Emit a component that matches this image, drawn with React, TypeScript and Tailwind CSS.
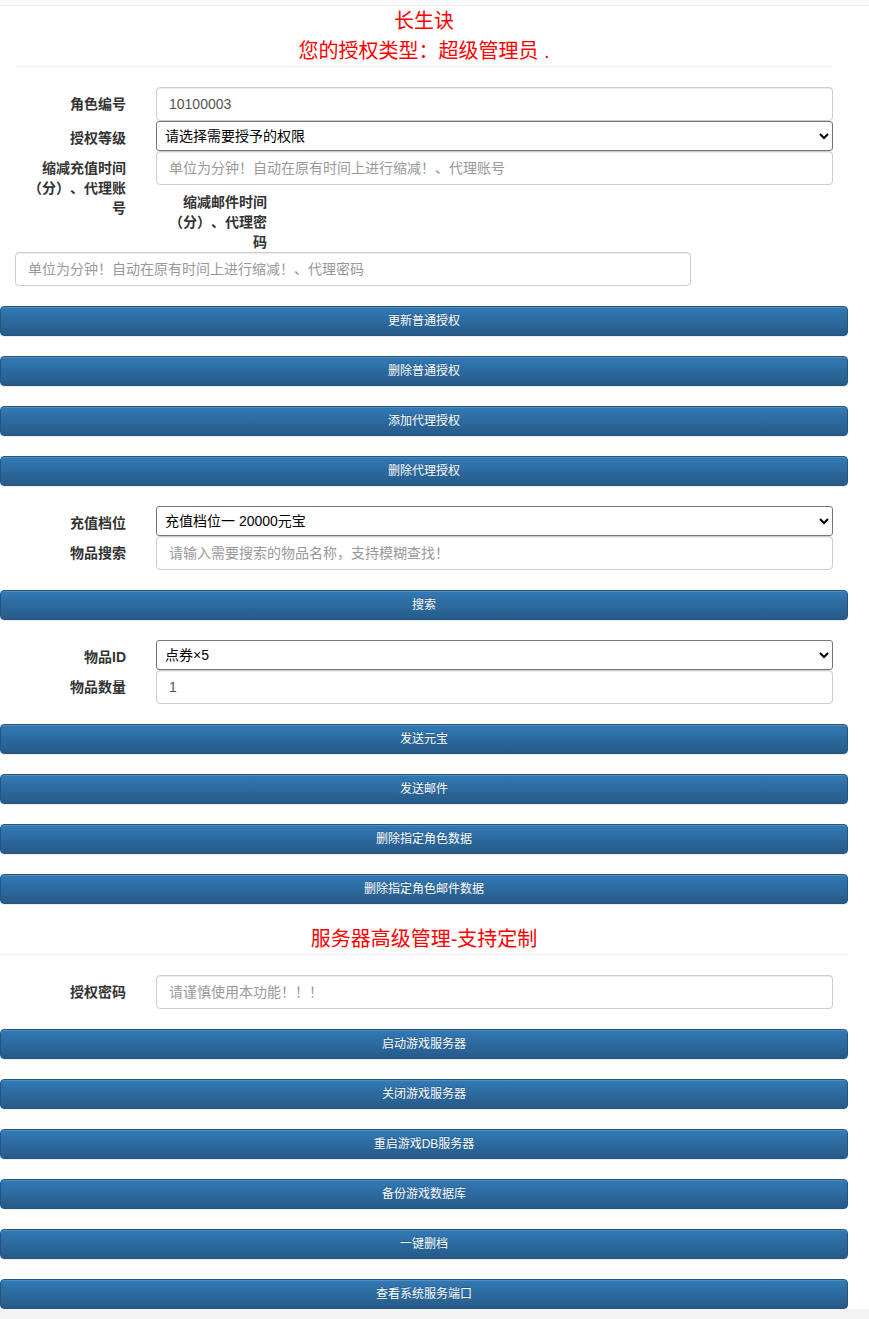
import React from "react";

const font = '"Liberation Sans","Noto Sans CJK SC",sans-serif';

function Btn({ children, last }: { children: React.ReactNode; last?: boolean }) {
  return (
    <button
      className={`block w-full h-[30px] rounded-[4px] border border-[#245580] bg-linear-to-b from-[#337ab7] to-[#265a88] text-white text-[12px] leading-[28px] text-center [text-shadow:0_-1px_0_rgba(0,0,0,0.2)] shadow-[inset_0_1px_0_rgba(255,255,255,0.15),0_1px_1px_rgba(0,0,0,0.075)] ${last ? "" : "mb-[20px]"}`}
    >
      {children}
    </button>
  );
}

function Input({ value, placeholder, className = "" }: { value?: string; placeholder?: string; className?: string }) {
  return (
    <input
      readOnly
      defaultValue={value}
      placeholder={placeholder}
      className={`block h-[34px] w-full rounded-[4px] border border-[#ccc] bg-white px-[12px] text-[14px] text-[#555] placeholder:text-[#999] shadow-[inset_0_1px_1px_rgba(0,0,0,0.075)] outline-none ${className}`}
    />
  );
}

function Select({ value }: { value: string }) {
  return (
    <select
      defaultValue={value}
      className="block h-[30px] w-full rounded-[3px] border border-[#767676] bg-white pl-[4px] text-[14px] text-black outline-none"
    >
      <option>{value}</option>
    </select>
  );
}

function Label({ children, className = "" }: { children: React.ReactNode; className?: string }) {
  return (
    <div className={`w-[141px] shrink-0 pl-[15px] pr-[15px] pt-[7px] text-right text-[14px] font-bold leading-[20px] text-[#333] [text-spacing-trim:space-all] ${className}`}>
      {children}
    </div>
  );
}

function Row({ label, children }: { label: React.ReactNode; children: React.ReactNode }) {
  return (
    <div className="flex items-start">
      <Label>{label}</Label>
      <div className="flex-1 pl-[15px] pr-[15px]">{children}</div>
    </div>
  );
}

export default function App() {
  return (
    <div className="bg-white [text-spacing-trim:space-all]" style={{ fontFamily: font }}>
      <div className="h-[6px] border-b border-[#eee] bg-[#fafafa]" />
      <div className="w-[848px]">
        <div className="text-center text-[20px] leading-[30px] text-[#f00]">长生诀</div>
        <div className="text-center text-[20px] leading-[30px] text-[#f00]">您的授权类型：超级管理员 .</div>
        <div className="mx-[15px] mb-[20px] border-t border-[#eee]" />

        <Row label="角色编号">
          <Input value="10100003" />
        </Row>
        <Row label="授权等级">
          <Select value="请选择需要授予的权限" />
        </Row>
        <div className="flex items-start h-[34px]">
          <Label className="h-[34px] overflow-visible">缩减充值时间（分）、代理账号</Label>
          <div className="flex-1 pl-[15px] pr-[15px]">
            <Input placeholder="单位为分钟！自动在原有时间上进行缩减！、代理账号" />
          </div>
        </div>
        <div className="flex">
          <Label className="ml-[141px] h-[67px]">缩减邮件时间（分）、代理密码</Label>
        </div>
        <div className="px-[15px] w-[706px]">
          <Input placeholder="单位为分钟！自动在原有时间上进行缩减！、代理密码" />
        </div>

        <div className="mt-[20px]">
          <Btn>更新普通授权</Btn>
          <Btn>删除普通授权</Btn>
          <Btn>添加代理授权</Btn>
          <Btn>删除代理授权</Btn>
        </div>

        <Row label="充值档位">
          <Select value="充值档位一 20000元宝" />
        </Row>
        <Row label="物品搜索">
          <Input placeholder="请输入需要搜索的物品名称，支持模糊查找！" />
        </Row>
        <div className="mt-[20px]">
          <Btn>搜索</Btn>
        </div>

        <Row label="物品ID">
          <Select value="点券×5" />
        </Row>
        <Row label="物品数量">
          <Input value="1" />
        </Row>
        <div className="mt-[20px]">
          <Btn>发送元宝</Btn>
          <Btn>发送邮件</Btn>
          <Btn>删除指定角色数据</Btn>
          <Btn>删除指定角色邮件数据</Btn>
        </div>

        <div className="text-center text-[20px] leading-[30px] text-[#f00]">服务器高级管理-支持定制</div>
        <div className="mb-[20px] border-t border-[#eee]" />

        <Row label="授权密码">
          <Input placeholder="请谨慎使用本功能！！！" />
        </Row>
        <div className="mt-[20px]">
          <Btn>启动游戏服务器</Btn>
          <Btn>关闭游戏服务器</Btn>
          <Btn>重启游戏DB服务器</Btn>
          <Btn>备份游戏数据库</Btn>
          <Btn>一键删档</Btn>
          <Btn last>查看系统服务端口</Btn>
        </div>
      </div>
      <div className="h-[10px] bg-[#f3f3f3]" />
    </div>
  );
}
